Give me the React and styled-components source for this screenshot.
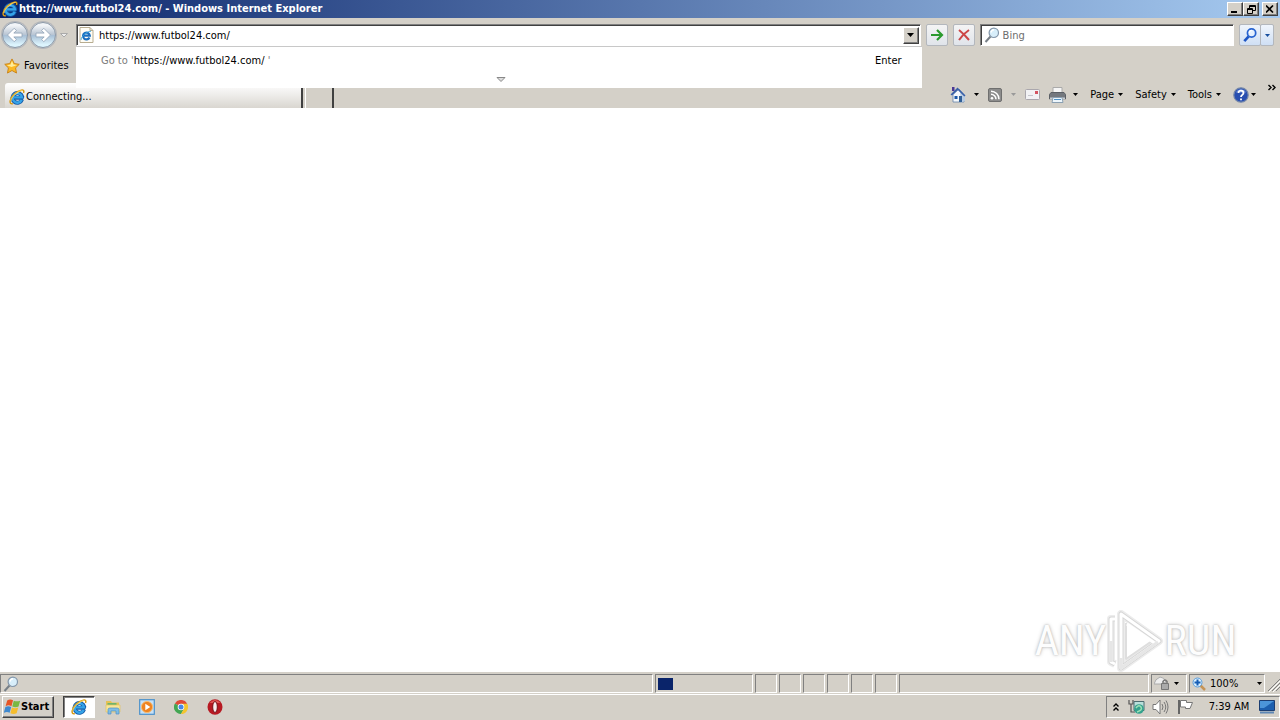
import React from "react";
import styled, { createGlobalStyle, css } from "styled-components";

const Global = createGlobalStyle`
  * { box-sizing: border-box; }
  html, body { margin: 0; padding: 0; }
  body { background: #fff; color: #000; font: 11px/14px "DejaVu Sans Condensed", "DejaVu Sans", sans-serif; }
  button, input { font: inherit; color: inherit; }
  button { padding: 0; margin: 0; background: none; border: 0; }
  svg { display: block; flex: none; }
`;

const face = "#d4d0c8";

const raised = css`
  border: 1px solid;
  border-color: #fff #404040 #404040 #fff;
  box-shadow: inset -1px -1px 0 #808080;
`;

const Window = styled.div`
  min-height: 100vh;
  display: flex;
  flex-direction: column;
`;

const TitleBar = styled.header`
  height: 18px;
  display: flex;
  align-items: center;
  gap: 1px;
  padding: 0 2px;
  background: linear-gradient(90deg, #0a246a, #a6caf0);
`;

const Title = styled.h1`
  flex: 1;
  margin: 0;
  color: #fff;
  font-size: 11px;
  line-height: 14px;
  font-weight: bold;
  white-space: nowrap;
`;

const CaptionButton = styled.button`
  width: 16px;
  height: 14px;
  display: grid;
  place-items: center;
  background: ${face};
  margin-left: ${(p) => (p.$apart ? "2px" : "0")};
  margin-right: ${(p) => (p.$joined ? "-1px" : "0")};
  ${raised}
`;

const Chrome = styled.div`
  background: ${face};
`;

const NavRow = styled.div`
  height: 34px;
  display: flex;
  align-items: center;
  gap: 5px;
  padding: 0 6px 0 2px;
`;

const NavButtons = styled.div`
  display: flex;
  align-items: center;
  gap: 2px;
  width: 69px;
`;

const RoundButton = styled.button`
  width: 26px;
  height: 26px;
  border: 1px solid #8b9aab;
  border-radius: 13px;
  display: grid;
  place-items: center;
  background: linear-gradient(#f2f5f8 10%, #b9c5d3 48%, #a9c0d6 52%, #dcf4fd 90%);
  box-shadow: 0 0 0 1px #b4b6ba;
`;

const PlainButton = styled.button`
  display: flex;
  align-items: center;
  justify-content: center;
  gap: ${(p) => p.$gap || "4px"};
  white-space: nowrap;
`;

const Address = styled.div`
  position: relative;
  flex: 1;
  height: 22px;
  display: flex;
  align-items: center;
  gap: 5px;
  padding: 0 1px 0 2px;
  background: #fff;
  border: 1px solid;
  border-color: #808080 #fff #fff #808080;
  box-shadow: inset 1px 1px 0 #404040;
`;

const Field = styled.input`
  flex: 1;
  min-width: 0;
  height: 16px;
  padding: 0;
  border: 0;
  outline: 0;
  background: transparent;
  &::placeholder { color: #6d6d6d; opacity: 1; }
`;

const ArrowButton = styled.button`
  width: 16px;
  height: 17px;
  display: grid;
  place-items: center;
  background: ${face};
  ${raised}
`;

const Suggestions = styled.div`
  position: absolute;
  z-index: 2;
  top: 21px;
  left: -1px;
  right: -2px;
  height: 42px;
  padding: 7px 20px 0 25px;
  background: #fff;
  border-top: 1px solid #c8c8c8;
  display: flex;
  flex-direction: column;
  gap: 9px;
`;

const Suggestion = styled.div`
  display: flex;
  justify-content: space-between;
  color: #7b7b7b;
  b { font-weight: normal; color: #000; }
`;

const Expand = styled.button`
  align-self: center;
  height: 6px;
`;

const ToolButton = styled.button`
  width: 22px;
  height: 22px;
  display: grid;
  place-items: center;
  border: 1px solid #b3b7bd;
  border-radius: 2px;
  background: linear-gradient(#f4f4f4, #e0e4ea);
`;

const SearchBox = styled.div`
  width: 20%;
  height: 22px;
  display: flex;
  align-items: center;
  gap: 3px;
  padding: 0 3px;
  background: #fff;
  border: 1px solid;
  border-color: #808080 #fff #fff #808080;
  box-shadow: inset 1px 1px 0 #404040;
`;

const SplitButton = styled.div`
  display: flex;
  button { background: linear-gradient(#f0f5fc, #cfdff4); }
  button:last-child { width: 14px; margin-left: -1px; }
`;

const FavoritesRow = styled.div`
  height: 31px;
  display: flex;
  align-items: center;
  padding: 0 4px 3px;
`;

const TabRow = styled.div`
  height: 25px;
  display: flex;
  align-items: flex-end;
  padding-left: 5px;
`;

const Tab = styled.button`
  width: 298px;
  height: 25px;
  padding: 2px 4px 0;
  display: flex;
  align-items: center;
  gap: 1px;
  background: linear-gradient(#fff, #f1f0ee 40%, #d9d6d0);
  border-right: 2px solid #404040;
  border-radius: 3px 0 0 0;
`;

const NewTab = styled.button`
  width: 29px;
  height: 20px;
  margin-left: 2px;
  border-left: 1px solid #fff;
  border-right: 2px solid #404040;
`;

const CommandBar = styled.nav`
  margin-left: auto;
  height: 25px;
  padding: 0 4px 2px 0;
  display: flex;
  align-items: center;
  gap: 12px;
`;

const IconCommands = styled.div`
  display: flex;
  align-items: center;
  gap: 9px;
`;

const Page = styled.main`
  position: relative;
  flex: 1;
  background: #fff;
`;

const Watermark = styled.div`
  position: absolute;
  right: 48px;
  bottom: 0;
  display: flex;
  align-items: center;
  gap: 5px;
  color: #fdfdfd;
  font: 42px/62px "Liberation Sans Narrow", "Roboto Condensed", Roboto, sans-serif;
  text-shadow: 0 0 2px #b4b4b4, 0 0 4px #ccc;
  span { width: 63px; display: flex; justify-content: center; }
`;

const StatusBar = styled.footer`
  height: 22px;
  display: flex;
  gap: 2px;
  padding: 2px 0 1px;
  background: ${face};
`;

const Pane = styled.div`
  width: ${(p) => p.$w || "auto"};
  flex: ${(p) => (p.$grow ? "1" : "none")};
  display: flex;
  align-items: center;
  gap: 4px;
  padding: 0 2px;
  border: 1px solid;
  border-color: #808080 #fff #fff #808080;
`;

const ZoomLevel = styled.span`
  flex: 1;
`;

const Progress = styled.div`
  width: 15px;
  height: 12px;
  background: #0a246a;
`;

const Taskbar = styled.footer`
  height: 26px;
  display: flex;
  align-items: center;
  padding: 0 0 1px 2px;
  border-top: 1px solid #fff;
  background: ${face};
`;

const StartButton = styled.button`
  width: 52px;
  height: 22px;
  display: flex;
  align-items: center;
  padding-left: 1px;
  font-weight: bold;
  ${raised}
`;

const Launchers = styled.div`
  display: flex;
  gap: 2px;
  margin-left: 9px;
`;

const Launcher = styled.button`
  width: 32px;
  height: 22px;
  display: grid;
  place-items: center;
  border: 1px solid transparent;
  ${(p) =>
    p.$active &&
    css`
      background: #fff;
      border-color: #404040 #fff #fff #404040;
      box-shadow: inset 1px 1px 0 #808080;
    `}
`;

const Tray = styled.div`
  margin-left: auto;
  width: 174px;
  height: 22px;
  display: flex;
  align-items: center;
  justify-content: space-between;
  padding: 0 4px 0 5px;
  border: 1px solid;
  border-color: #808080 #fff #fff #808080;
`;

const Clock = styled.time`
  padding: 0 2px 0 8px;
  white-space: nowrap;
`;

const Down = ({ color = "#000", w = 5 }) => (
  <svg width={w} height={(w + 1) / 2} viewBox="0 0 6 3" preserveAspectRatio="none">
    <path d="M0 0h6L3 3z" fill={color} />
  </svg>
);

const Explorer = ({ size = 16 }) => (
  <svg width={size} height={size} viewBox="0 0 16 16" fill="none">
    <path d="M13 10.600A4.900 4.900 0 1 1 13.200 7.800L12.800 8.800H5" stroke="#1459a6" strokeWidth="4" />
    <path d="M12.700 10.700A4.700 4.700 0 1 1 13 8.400H4.600" stroke="#35a3e8" strokeWidth="2.400" />
    <path d="M4.700 5.900Q6.500 3.500 9.500 4" stroke="#a5e4ff" strokeWidth="1.200" />
    <path d="M3.800 14.500C-.5 15.800.6 9.200 5.400 5 10 .9 16.300-.8 14.500 4" stroke="#d79a16" strokeWidth="1.500" />
    <path d="M2 12C2 8 9.500 1.300 13.600 1.500" stroke="#ffe270" strokeWidth=".8" />
  </svg>
);

const PageIcon = () => (
  <svg width="15" height="16" viewBox="0 0 15 16" fill="none">
    <path d="M1 .5h10l3 3v12H1z" fill="#fffdf5" stroke="#b8ad91" />
    <path d="M11 .5v3h3" stroke="#b8ad91" />
    <path d="M10.500 10.500A3.400 3.400 0 1 1 10.800 8.600H4.600" stroke="#1c6fc0" strokeWidth="2.200" />
    <path d="M2.500 13C.8 11.600 6.600 4.400 12 4.200" stroke="#37a5dd" />
  </svg>
);

const RoundArrow = ({ flip }) => (
  <svg width="18" height="18" viewBox="0 0 18 18">
    <path
      transform={flip ? "translate(18 0) scale(-1 1)" : undefined}
      d="M8.200 2.300 1.500 9l6.700 6.700 2.200-2.200-2.600-2.600H16V7.100H7.800l2.600-2.600z"
      fill="#fff"
      stroke="#8fa1b5"
      strokeWidth=".8"
    />
  </svg>
);

const Lens = ({ blue, size = 16 }) => (
  <svg width={size} height={size} viewBox="0 0 16 16" fill="none">
    <path d="M6.500 9.500 1.500 15" stroke={blue ? "#1d55c4" : "#777f87"} strokeWidth={blue ? 3 : 2} />
    <circle cx="9.800" cy="5.800" r="4.700" fill={blue ? "#e6f1ff" : "#d8eefa"} stroke={blue ? "#2864d0" : "#8497aa"} strokeWidth={blue ? 2 : 1.2} />
    <path d="M7 5.500Q7.500 3 10 2.800" stroke="#fff" strokeWidth="1.400" />
  </svg>
);

const Star = () => (
  <svg width="16" height="16" viewBox="0 0 17 17">
    <path d="M8.500 1 10.900 5.900 16.200 6.700 12.300 10.500 13.300 16 8.500 13.300 3.700 16 4.700 10.500.8 6.700 6.100 5.900z" fill="#fcb925" stroke="#c98218" strokeLinejoin="round" />
    <path d="M8.500 3 10 7l4 .5-6 2-5-1.900L7 7z" fill="#ffed9c" />
  </svg>
);

const House = () => (
  <svg width="17" height="17" viewBox="0 0 17 17">
    <path d="M3 8.500 9 3l5 5.500V16H3z" fill="#f5f8fc" stroke="#6684aa" strokeWidth=".8" />
    <path d="M10 5l5 4v6l-4 1.500z" fill="#b9cce3" />
    <path d="M2 1h2.500v4H2z" fill="#4a3794" />
    <path d="M.5 8.500 7.500 1.500l8 8-1.200 1-6.500-6.500L2 9.600z" fill="#3a61a8" />
    <path d="M4.500 10h3v3h-3z" fill="#1b58a8" />
    <path d="M9 10h3v6H9z" fill="#315f96" />
  </svg>
);

const Feed = () => (
  <svg width="14" height="14" viewBox="0 0 14 14" fill="none">
    <rect x=".5" y=".5" width="13" height="13" rx="1.500" fill="#8c8c8c" stroke="#6f6f6f" />
    <circle cx="4" cy="10.300" r="1.300" fill="#fff" />
    <path d="M3 6.200a5 5 0 0 1 5 5M3 3.200a8 8 0 0 1 8 8" stroke="#fff" strokeWidth="1.500" />
  </svg>
);

const Mail = () => (
  <svg width="15" height="11" viewBox="0 0 15 11">
    <rect x=".5" y=".5" width="14" height="10" rx="1" fill="#f2f2f4" stroke="#aaa7ad" />
    <path d="M10 2h3v3h-3z" fill="#d45461" />
    <path d="M3 6.500h5" stroke="#c5c5cc" />
  </svg>
);

const Printer = () => (
  <svg width="17" height="16" viewBox="0 0 17 16">
    <path d="M4 .5h9v6H4z" fill="#f6f6f6" stroke="#aaa" />
    <path d="M2 5.500h13l1.500 2v4.500H.5V7.500z" fill="#74787e" stroke="#5b5f65" />
    <path d="M1 10.500h15v2H1z" fill="#c8ccd1" />
    <path d="M4 10.500h9l1 5H3z" fill="#edf6fc" stroke="#8ba0b2" />
    <path d="M5 12.500h7" stroke="#4d91c6" />
  </svg>
);

const Help = () => (
  <svg width="16" height="16" viewBox="0 0 16 16" fill="none">
    <circle cx="8" cy="8" r="7.200" fill="#294fb0" stroke="#7386a9" strokeWidth="1.200" />
    <path d="M3 5.500A5.500 5.500 0 0 1 13 5.500" fill="#6d8ed8" />
    <path d="M5.500 6.100C5.500 2.600 10.500 3 10.500 6 10.500 7.900 8 7.900 8 10M8 11.500v1.800" stroke="#fff" strokeWidth="1.800" />
  </svg>
);

const Flag = () => (
  <svg width="17" height="16" viewBox="0 0 16 15">
    <path d="M3 1.300Q5.700-.3 8.500 1.200L7 6.700Q4.300 5.200 1.500 6.700z" fill="#e65525" />
    <path d="M9.200 1.600q2.900 1.200 6 0l-1.500 5.400q-2.900 1.400-5.900 0z" fill="#79b842" />
    <path d="M1.300 7.500q2.700-1.500 5.500 0l-1.500 5.400Q2.700 11.500-.2 13z" fill="#3f89cf" />
    <path d="M7.500 8q2.900 1.400 5.900 0l-1.500 5.300q-2.900 1.500-5.900 0z" fill="#f5bd2d" />
  </svg>
);

const Folder = () => (
  <svg width="16" height="16" viewBox="0 0 16 16">
    <path d="M1 2h5l1 1.500h7V13H1z" fill="#e6c254" />
    <path d="M2.500 4h9v3h-9z" fill="#6fb56b" />
    <path d="M1 6h14v7H1z" fill="#f9e698" stroke="#dfc166" strokeWidth=".7" />
    <path d="M3 15v-4.500Q3 9 5 9h7q2 0 2 1.500V15h-3v-3H6v3z" fill="#7fbde5" stroke="#4d91c5" strokeWidth=".7" />
  </svg>
);

const Player = () => (
  <svg width="16" height="16" viewBox="0 0 16 16">
    <rect x=".7" y=".7" width="14.600" height="14.600" fill="#c6e0f6" stroke="#4b91cb" strokeWidth="1.200" />
    <circle cx="8" cy="8" r="5.600" fill="#ef8320" stroke="#f7bc72" />
    <path d="M6.300 4.800 11.300 8l-5 3.200z" fill="#fff" />
  </svg>
);

const ChromeLogo = () => (
  <svg width="14" height="14" viewBox="0 0 14 14">
    <path d="M7 7 .9 3.500A7 7 0 0 1 13.100 3.500z" fill="#df4937" />
    <path d="M7 7 .9 3.500A7 7 0 0 0 7 14l3-5.200z" fill="#43a653" />
    <path d="M7 3.800h6.300A7 7 0 0 1 7 14l3-5.300z" fill="#f4c52e" />
    <circle cx="7" cy="7" r="3.300" fill="#fff" />
    <circle cx="7" cy="7" r="2.500" fill="#4687e6" />
  </svg>
);

const OperaLogo = () => (
  <svg width="16" height="16" viewBox="0 0 16 16">
    <ellipse cx="8" cy="8" rx="7.500" ry="7.700" fill="#b71922" />
    <path d="M2.500 4Q8-2 13.500 4" fill="#df5654" />
    <ellipse cx="8" cy="8" rx="2.300" ry="5.500" fill="#f8eeee" stroke="#741017" />
  </svg>
);

const AnyRunMark = () => (
  <svg width="57" height="62" viewBox="0 0 57 62" fill="none" strokeLinejoin="round">
    <g stroke="#ececec" strokeWidth="8">
      <path d="M14 4v54l38-27z" />
      <path d="M8 9H4v43l4 2" />
    </g>
    <g stroke="#d6d6d6" strokeWidth="5">
      <path d="M14 4v54l38-27z" />
      <path d="M8 9H4v43l4 2" />
    </g>
    <g stroke="#fff" strokeWidth="3">
      <path d="M14 4v54l38-27z" />
      <path d="M8 9H4v43l4 2" />
    </g>
    <path d="M19 13v36l26-18" stroke="#dedede" strokeWidth="2" />
    <path d="M20 14 49 34" stroke="#fff" strokeWidth="3" />
    <path d="M14 48v10l37-26M4 31v21" stroke="#e6e6e6" strokeWidth="3" />
  </svg>
);

const Network = () => (
  <svg width="17" height="16" viewBox="0 0 17 16" fill="none">
    <path d="M1 1v4h4V1M3 5v8h4" stroke="#555" strokeWidth="1.200" />
    <path d="M6 2.500h10v9H6z" fill="#b9dfda" stroke="#4d6b70" />
    <circle cx="11" cy="10" r="4.800" fill="#33a18d" />
    <path d="M8 9q3-4 5-1t-4 5" stroke="#9de0b6" strokeWidth="1.500" />
  </svg>
);

const Speaker = () => (
  <svg width="17" height="16" viewBox="0 0 17 16" fill="none" stroke="#777">
    <path d="M1 5.500h3L8 1v14l-4-4.500H1z" fill="#fff" />
    <path d="M10 5q2 3 0 6M12 3q3.500 5 0 10M14 1.500q4 6.500 0 13" />
  </svg>
);

const ActionFlag = () => (
  <svg width="16" height="16" viewBox="0 0 16 16">
    <path d="M2 1v14" stroke="#666" strokeWidth="2" />
    <path d="M3.500 1.500h6v2H15.500L13 9.500H8.500V8h-5z" fill="#fff" stroke="#777" />
  </svg>
);

const Desktop = () => (
  <svg width="16" height="14" viewBox="0 0 16 14">
    <path d="M.5.500h15v10H.5z" fill="#1c5fae" stroke="#1c3e72" />
    <path d="M1 1h14L5 8H1z" fill="#4b95d9" />
    <path d="M1 12.500h14" stroke="#5e87b5" strokeWidth="2" />
  </svg>
);

const Shield = () => (
  <svg width="16" height="15" viewBox="0 0 16 15">
    <path d="M0 8Q1 3 6 1q4 0 6 5L8 8z" fill="#eee" stroke="#aaa" />
    <path d="M7.500 7.500h7v6h-7z" fill="#aaa" stroke="#777" />
    <path d="M9 7V5.500q2-3 4 0V7" fill="none" stroke="#777" strokeWidth="1.500" />
  </svg>
);

const ZoomIcon = () => (
  <svg width="14" height="14" viewBox="0 0 14 14" fill="none">
    <path d="m8 8 5 5" stroke="#c69456" strokeWidth="2.500" />
    <circle cx="5.500" cy="5.500" r="4.500" fill="#d9efff" stroke="#5a9cd9" />
    <path d="M2.500 5.500h6M5.500 2.500v6" stroke="#155cb4" strokeWidth="2" />
  </svg>
);

const Chevrons = ({ up }) => (
  <svg width="8" height="8" viewBox="0 0 8 8" fill="none" stroke="#000" strokeWidth="1.400">
    <path d={up ? "m1.500 3.500 2.500-2.500 2.500 2.500M1.500 7.500 4 5l2.500 2.500" : "m.5 1 2.500 2.500L.5 6M4.500 1 7 3.500 4.500 6"} />
  </svg>
);

const Menu = ({ label, children, muted, gap }) => (
  <PlainButton aria-label={label} $gap={gap}>
    {children}
    <Down color={muted ? "#999" : "#000"} />
  </PlainButton>
);

const Overflow = styled(PlainButton)`
  align-self: flex-start;
  height: 10px;
`;

export default function App() {
  return (
    <>
      <Global />
      <Window>
        <TitleBar>
          <Explorer />
          <Title>http://www.futbol24.com/ - Windows Internet Explorer</Title>
          <CaptionButton aria-label="Minimize" $joined>
            <svg width="8" height="8"><path d="M0 6h6v2H0z" /></svg>
          </CaptionButton>
          <CaptionButton aria-label="Restore">
            <svg width="9" height="9" fill="none" stroke="#000"><path d="M2.500 3V.5h6v5H6M2 1.500h7M.5 3.500h5v5h-5zM0 4.500h6" /></svg>
          </CaptionButton>
          <CaptionButton aria-label="Close" $apart>
            <svg width="8" height="8" stroke="#000" strokeWidth="1.600"><path d="m0 .5 7 7m0-7-7 7" /></svg>
          </CaptionButton>
        </TitleBar>

        <Chrome>
          <NavRow>
            <NavButtons>
              <RoundButton aria-label="Back"><RoundArrow /></RoundButton>
              <RoundButton aria-label="Forward"><RoundArrow flip /></RoundButton>
              <PlainButton aria-label="Recent pages">
                <svg width="12" height="5" viewBox="0 0 12 5"><path d="M2.500.5h7L6 4z" fill="#eee" stroke="#aaa" /></svg>
              </PlainButton>
            </NavButtons>
            <Address>
              <PageIcon />
              <Field aria-label="Address" defaultValue="https://www.futbol24.com/" />
              <ArrowButton aria-label="Show address list"><Down w={7} /></ArrowButton>
              <Suggestions>
                <Suggestion>
                  <span>Go to '<b>https://www.futbol24.com/</b> '</span>
                  <b>Enter</b>
                </Suggestion>
                <Expand aria-label="Show more">
                  <svg width="10" height="6" viewBox="0 0 10 6"><path d="M1 .5h8L5 4.500z" fill="#ddd" stroke="#888" /></svg>
                </Expand>
              </Suggestions>
            </Address>
            <ToolButton aria-label="Go">
              <svg width="14" height="12" viewBox="0 0 14 12" fill="none" stroke="#2b9a2e" strokeWidth="2.200"><path d="M1 6h11M7 1l5 5-5 5" /></svg>
            </ToolButton>
            <ToolButton aria-label="Stop">
              <svg width="12" height="12" viewBox="0 0 12 12" fill="none" stroke="#cc4646" strokeWidth="2"><path d="M1 1q5 4 10 10M11 1Q5 5 1 11" /></svg>
            </ToolButton>
            <SearchBox>
              <Lens />
              <Field aria-label="Search" placeholder="Bing" />
            </SearchBox>
            <SplitButton>
              <ToolButton aria-label="Search the web"><Lens blue size={14} /></ToolButton>
              <ToolButton aria-label="Search options"><Down color="#164e9e" /></ToolButton>
            </SplitButton>
          </NavRow>
          <FavoritesRow>
            <PlainButton><Star />Favorites</PlainButton>
          </FavoritesRow>
          <TabRow>
            <Tab><Explorer />Connecting...</Tab>
            <NewTab aria-label="New tab" />
            <CommandBar>
              <IconCommands>
                <Menu label="Home" gap="7px"><House /></Menu>
                <Menu label="Feeds" gap="9px" muted><Feed /></Menu>
                <PlainButton aria-label="Read mail"><Mail /></PlainButton>
                <Menu label="Print" gap="7px"><Printer /></Menu>
              </IconCommands>
              <Menu>Page</Menu>
              <Menu>Safety</Menu>
              <Menu>Tools</Menu>
              <Menu label="Help" gap="2px"><Help /></Menu>
              <Overflow aria-label="More commands"><Chevrons /></Overflow>
            </CommandBar>
          </TabRow>
        </Chrome>

        <Page>
          <Watermark><span>ANY</span><AnyRunMark /><span>RUN</span></Watermark>
        </Page>

        <StatusBar>
          <Pane $grow><Lens /></Pane>
          <Pane $w="98px"><Progress /></Pane>
          {[0, 1, 2, 3, 4, 5].map((n) => <Pane key={n} $w="22px" />)}
          <Pane $w="250px" />
          <Pane $w="36px"><Shield /><PlainButton aria-label="Security options"><Down /></PlainButton></Pane>
          <Pane $w="76px">
            <ZoomIcon />
            <ZoomLevel>100%</ZoomLevel>
            <PlainButton aria-label="Zoom level"><Down /></PlainButton>
          </Pane>
          <svg width="13" height="18" viewBox="0 0 13 18" stroke="#808080"><path d="M1 17 13 5M5 17l8-8M9 17l4-4" /><path d="M2 18 14 6M6 18l8-8" stroke="#fff" /></svg>
        </StatusBar>

        <Taskbar>
          <StartButton><Flag />Start</StartButton>
          <Launchers>
            <Launcher $active aria-label="Internet Explorer"><Explorer /></Launcher>
            <Launcher aria-label="File Explorer"><Folder /></Launcher>
            <Launcher aria-label="Media Player"><Player /></Launcher>
            <Launcher aria-label="Chrome"><ChromeLogo /></Launcher>
            <Launcher aria-label="Opera"><OperaLogo /></Launcher>
          </Launchers>
          <Tray>
            <Chevrons up />
            <Network />
            <Speaker />
            <ActionFlag />
            <Clock>7:39 AM</Clock>
            <Desktop />
          </Tray>
        </Taskbar>
      </Window>
    </>
  );
}
